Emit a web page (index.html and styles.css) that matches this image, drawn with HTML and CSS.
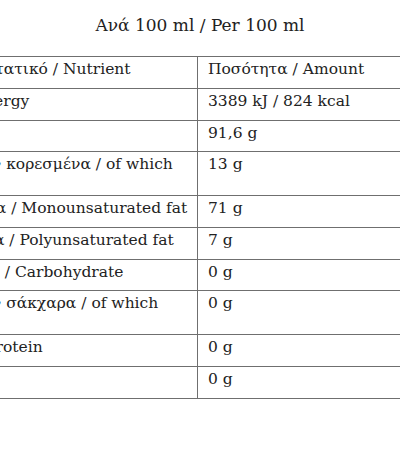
FILE: index.html
```html
<!DOCTYPE html>
<html lang="el">

<head>
    <meta charset="UTF-8">
    <meta name="viewport" content="width=device-width, initial-scale=1.0">
    <title>Διατροφική αξία</title>
    <link rel="stylesheet" href="styles.css">
</head>

<body>
    <div class="facts">
        <h2 class="facts-title">Ανά 100 ml / Per 100 ml</h2>
        <div class="facts-frame">
            <table class="facts-table">
                <tr class="row-head">
                    <td class="cell-name">Θρεπτικό συστατικό / Nutrient</td>
                    <td class="cell-value">Ποσότητα / Amount</td>
                </tr>
                <tr>
                    <td class="cell-name">Ενέργεια / Energy</td>
                    <td class="cell-value">3389 kJ / 824 kcal</td>
                </tr>
                <tr>
                    <td class="cell-name">Λιπαρά / Fat</td>
                    <td class="cell-value">91,6 g</td>
                </tr>
                <tr class="row-tall">
                    <td class="cell-name">εκ των οποίων κορεσμένα / of which<br>saturates</td>
                    <td class="cell-value">13 g</td>
                </tr>
                <tr>
                    <td class="cell-name">Μονοακόρεστα / Monounsaturated fat</td>
                    <td class="cell-value">71 g</td>
                </tr>
                <tr>
                    <td class="cell-name">Πολυακόρεστα / Polyunsaturated fat</td>
                    <td class="cell-value">7 g</td>
                </tr>
                <tr>
                    <td class="cell-name">Υδατάνθρακες / Carbohydrate</td>
                    <td class="cell-value">0 g</td>
                </tr>
                <tr class="row-tall">
                    <td class="cell-name">εκ των οποίων σάκχαρα / of which<br>sugars</td>
                    <td class="cell-value">0 g</td>
                </tr>
                <tr>
                    <td class="cell-name">Πρωτεΐνες / Protein</td>
                    <td class="cell-value">0 g</td>
                </tr>
                <tr>
                    <td class="cell-name">Αλάτι / Salt</td>
                    <td class="cell-value">0 g</td>
                </tr>
            </table>
        </div>
    </div>
</body>

</html>
```

FILE: styles.css
```css
* {
    padding: 0;
    margin: 0;
}

body {
    background: #fff;
    color: #222;
    font-family: "DejaVu Serif", "Liberation Serif", serif;
    overflow: hidden;
}

.facts {
    width: 400px;
    overflow: hidden;
}

.facts-title {
    padding-top: 14px;
    height: 42px;
    text-align: center;
    font-size: 17px;
    font-weight: normal;
    line-height: 22px;
}

.facts-frame {
    display: flex;
    justify-content: center;
}

.facts-table {
    flex: none;
    width: 640px;
    border-collapse: collapse;
    table-layout: fixed;
    font-size: 15.5px;
    line-height: 18px;
}

.facts-table td {
    height: 27.75px;
    padding: 3px 10px 0;
    vertical-align: top;
    border: 1.5px solid #6f6f6f;
    white-space: nowrap;
}

.facts-table .row-tall td {
    height: 39.75px;
}

.cell-name {
    width: 301px;
}

.facts-table .cell-name {
    padding-left: 5px;
}
```
